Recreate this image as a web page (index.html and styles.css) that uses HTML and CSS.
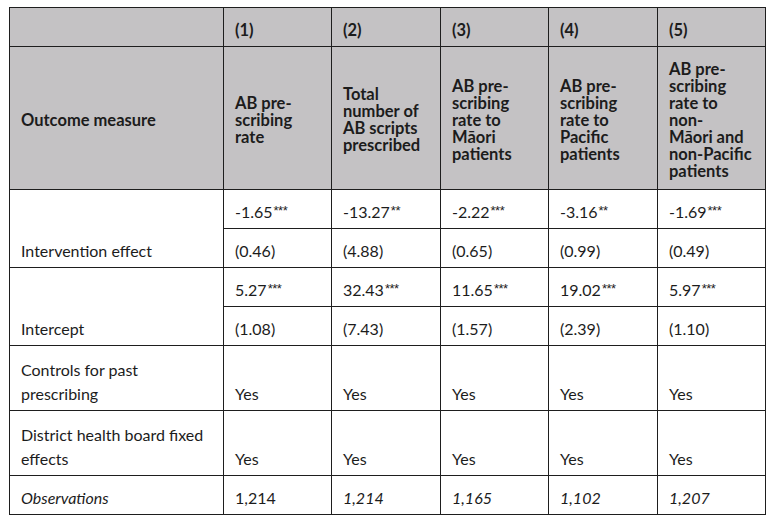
FILE: index.html
```html
<!DOCTYPE html>
<html>
<head>
<meta charset="utf-8">
<link rel="stylesheet" href="styles.css">
</head>
<body>
<table class="results">
  <colgroup>
    <col class="c-label">
    <col class="c-data">
    <col class="c-data2">
    <col class="c-data">
    <col class="c-data2">
    <col class="c-data">
  </colgroup>
  <thead>
    <tr class="r-num">
      <th></th>
      <th>(1)</th>
      <th>(2)</th>
      <th>(3)</th>
      <th>(4)</th>
      <th>(5)</th>
    </tr>
    <tr class="r-title">
      <th>Outcome measure</th>
      <th>AB pre-<br>scribing<br>rate</th>
      <th>Total<br>number of<br>AB scripts<br>prescribed</th>
      <th>AB pre-<br>scribing<br>rate to<br>Māori<br>patients</th>
      <th>AB pre-<br>scribing<br>rate to<br>Pacific<br>patients</th>
      <th>AB pre-<br>scribing<br>rate to<br>non-<br>Māori and<br>non-Pacific<br>patients</th>
    </tr>
  </thead>
  <tbody>
    <tr class="r-sub">
      <td rowspan="2">Intervention effect</td>
      <td>-1.65<sup>***</sup></td>
      <td>-13.27<sup>**</sup></td>
      <td>-2.22<sup>***</sup></td>
      <td>-3.16<sup>**</sup></td>
      <td>-1.69<sup>***</sup></td>
    </tr>
    <tr class="r-sub">
      <td>(0.46)</td>
      <td>(4.88)</td>
      <td>(0.65)</td>
      <td>(0.99)</td>
      <td>(0.49)</td>
    </tr>
    <tr class="r-sub">
      <td rowspan="2">Intercept</td>
      <td>5.27<sup>***</sup></td>
      <td>32.43<sup>***</sup></td>
      <td>11.65<sup>***</sup></td>
      <td>19.02<sup>***</sup></td>
      <td>5.97<sup>***</sup></td>
    </tr>
    <tr class="r-sub">
      <td>(1.08)</td>
      <td>(7.43)</td>
      <td>(1.57)</td>
      <td>(2.39)</td>
      <td>(1.10)</td>
    </tr>
    <tr class="r-tall">
      <td>Controls for past<br>prescribing</td>
      <td>Yes</td>
      <td>Yes</td>
      <td>Yes</td>
      <td>Yes</td>
      <td>Yes</td>
    </tr>
    <tr class="r-tall">
      <td>District health board fixed<br>effects</td>
      <td>Yes</td>
      <td>Yes</td>
      <td>Yes</td>
      <td>Yes</td>
      <td>Yes</td>
    </tr>
    <tr class="r-sub">
      <td class="it">Observations</td>
      <td>1,214</td>
      <td class="it">1,214</td>
      <td class="it">1,165</td>
      <td class="it">1,102</td>
      <td class="it">1,207</td>
    </tr>
  </tbody>
</table>
</body>
</html>
```

FILE: styles.css
```css
html, body {
  margin: 0;
  padding: 0;
  background: #ffffff;
}

body {
  padding: 7px 0 0 9px;
  font-family: "Lato", "Liberation Sans", sans-serif;
  font-size: 16px;
  color: #1c1c1c;
}

.results {
  border-collapse: collapse;
  table-layout: fixed;
  width: 757px;
  border: 1px solid #1e1e1e;
}

.c-label { width: 214px; }
.c-data { width: 108px; }
.c-data2 { width: 109px; }

.results th,
.results td {
  border: 1px solid #1e1e1e;
  padding: 0 4px 4px 11px;
  text-align: left;
  vertical-align: bottom;
  line-height: 24px;
  white-space: nowrap;
}

.results thead th {
  background: #c4c2c4;
  font-weight: 700;
  font-size: 16.5px;
}

.r-num { height: 39px; }

.r-title { height: 143px; }

.r-title th {
  vertical-align: middle;
  line-height: 17px;
  padding-bottom: 0;
  padding-top: 4px;
}

.r-sub { height: 39px; }

.r-tall { height: 65px; }

.results sup {
  font-family: "Liberation Sans", sans-serif;
  font-size: 13px;
  line-height: 0;
  vertical-align: 3px;
  margin-left: 1px;
  letter-spacing: -0.5px;
}

.it { font-style: italic; }
```
